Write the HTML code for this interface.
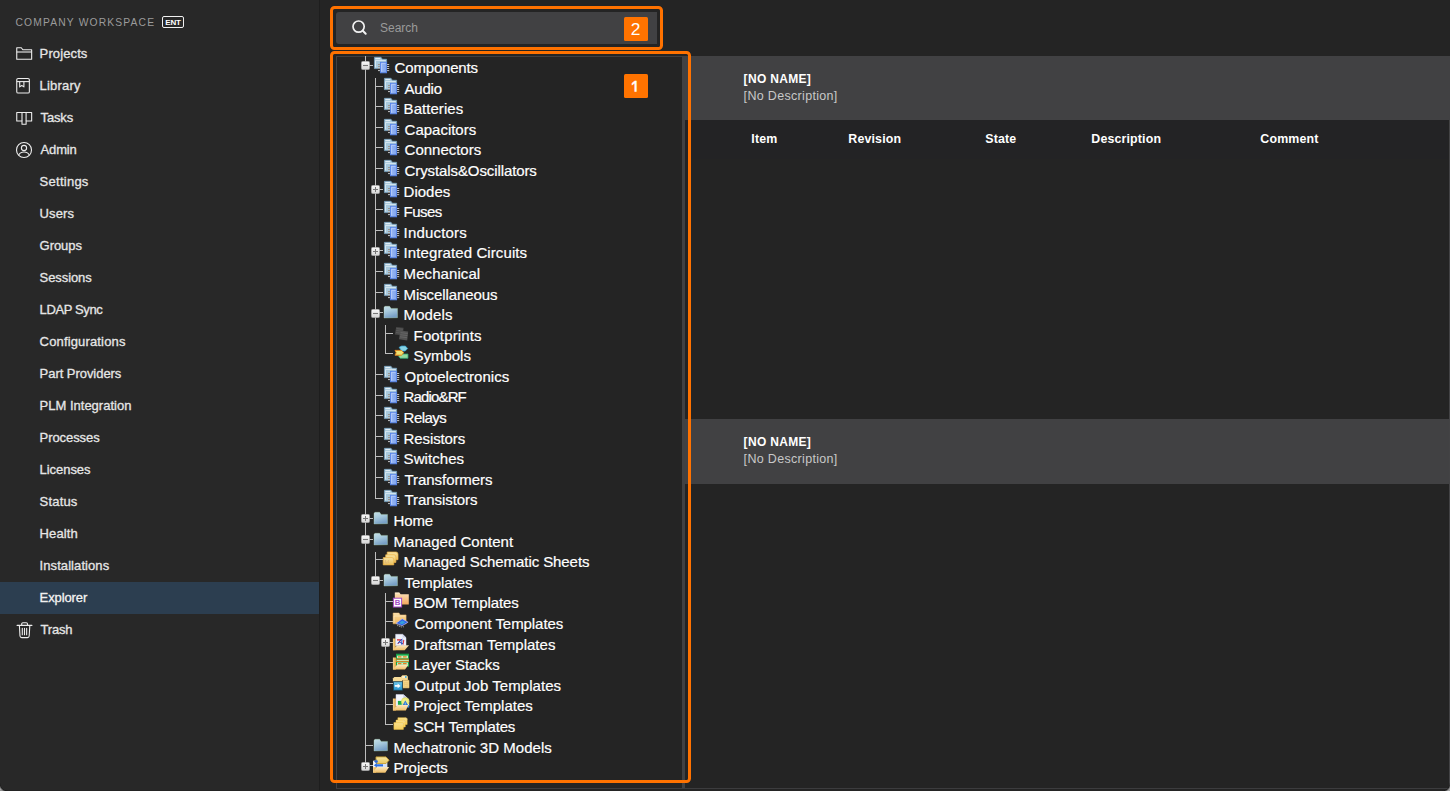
<!DOCTYPE html>
<html lang="en">
<head>
<meta charset="utf-8">
<title>Explorer</title>
<style>
html,body{margin:0;padding:0;background:#242424;}
body{width:1450px;height:791px;overflow:hidden;font-family:"Liberation Sans",sans-serif;color:#fff;}
#app{position:relative;width:1450px;height:791px;overflow:hidden;background:#242424;}
#sidebar{position:absolute;left:0;top:0;width:319px;height:791px;background:#282828;border-right:1px solid #1e1e1e;}
.ws{position:absolute;left:15.5px;top:17px;font-size:10.3px;letter-spacing:1.15px;color:#9b9b9b;line-height:12px;white-space:nowrap;}
.ent{position:absolute;left:162px;top:16px;width:20px;height:10px;border:1px solid #f0f0f0;border-radius:2px;font-size:8px;font-weight:bold;line-height:11px;text-align:center;color:#fff;letter-spacing:-0.1px;}
.sb{position:absolute;left:0;width:319px;height:32px;line-height:32px;font-size:13px;color:#e6e6e6;white-space:nowrap;-webkit-text-stroke:0.3px #e6e6e6;}
.sb span{position:absolute;left:40px;top:0;}
.sb.sel{background:#2c3e50;color:#fff;}
.sbi{position:absolute;left:15px;top:7px;overflow:visible;}
.corner{position:absolute;left:0;bottom:0;width:8px;height:8px;background:radial-gradient(circle at 8px 0px, rgba(0,0,0,0) 7.3px, rgba(20,20,20,0.45) 8px, #a6a6a6 9.6px);}
#sidebar:after{content:'';position:absolute;left:0;bottom:0;width:319px;height:1px;background:rgba(0,0,0,0.12);}
#main{position:absolute;left:0;top:0;width:1450px;height:791px;}
.band{position:absolute;left:685px;width:765px;height:64px;background:#414143;}
#band1{top:56px;}
#band2{top:419px;height:65px;}
#band2 .nn{top:16px;}
#band2 .nd{top:33px;}
#rstrip{position:absolute;left:1449px;top:120px;width:1px;height:669px;background:#434345;}
.corner2{position:absolute;right:0;bottom:0;width:8px;height:8px;background:radial-gradient(circle at 0px 0px, rgba(0,0,0,0) 7.3px, rgba(20,20,20,0.45) 8px, #a6a6a6 9.6px);}
.nn{position:absolute;left:58.6px;top:16px;font-size:12px;letter-spacing:0.32px;font-weight:bold;line-height:14px;color:#fff;white-space:nowrap;}
.nd{position:absolute;left:58.6px;top:32.5px;font-size:12.5px;letter-spacing:0.32px;line-height:14px;color:#c8c8c8;white-space:nowrap;}
#thead{position:absolute;left:685px;top:120px;width:763px;height:39px;background:#232325;}
#thead span{position:absolute;top:12px;font-size:12.4px;letter-spacing:0.15px;font-weight:bold;line-height:15px;margin-left:-0.7px;color:#fff;white-space:nowrap;}
#treepanel{position:absolute;left:336px;top:56px;width:345px;height:732px;border-left:1px solid #414143;border-top:1px solid #3e3e40;background:#242424;}
#split{position:absolute;left:682px;top:56px;width:3px;height:733px;background:#414143;}
#botline{position:absolute;left:336px;top:788px;width:1114px;height:1px;background:#3c3c3e;}
#search{position:absolute;left:336px;top:12px;width:321px;height:32px;background:#414143;border-radius:3px 0 0 3px;}
#search .mag{position:absolute;left:14.8px;top:6.8px;}
#search span{position:absolute;left:44px;top:0;line-height:32px;font-size:12px;color:#9a9a9a;}
.ob{position:absolute;border:3px solid #ff7200;border-radius:4.5px;box-sizing:border-box;}
#ob2{left:330px;top:6px;width:333px;height:44px;}
#ob1{left:330px;top:51px;width:361px;height:732px;}
.badge{position:absolute;width:24px;height:24px;background:#ff7300;color:#fff;font-size:17.4px;line-height:25px;text-align:center;border-radius:1.5px;overflow:hidden;}
.badge span{display:block;margin-left:-1px;}
.badge .one{transform-origin:50% 18.5px;transform:translateY(2.6px) scaleY(1.12);clip-path:inset(0 0 9.6px 0);-webkit-text-stroke:0.4px #fff;margin-left:-1.5px;}
#tree{position:absolute;left:0;top:0;width:682px;height:789px;overflow:hidden;}
#tree .ln{position:absolute;background:#bdbdbd;display:block;}
#tree .exp{position:absolute;}
#tree .ic{position:absolute;overflow:visible;}
.tl{position:absolute;-webkit-text-stroke:0.2px #fff;font-size:15px;line-height:20px;color:#fff;white-space:nowrap;text-align:justify;text-align-last:justify;}

</style>
</head>
<body>
<svg width="0" height="0" style="position:absolute">
<defs>

<linearGradient id="gF" x1="0" y1="0" x2="0.35" y2="1"><stop offset="0" stop-color="#c6e0e8"/><stop offset="0.45" stop-color="#a9cbdd"/><stop offset="1" stop-color="#789fc6"/></linearGradient>
<linearGradient id="gO" x1="0" y1="0" x2="0" y2="1"><stop offset="0" stop-color="#fbe3bd"/><stop offset="1" stop-color="#f3a95c"/></linearGradient>
<linearGradient id="gY" x1="0" y1="0" x2="0" y2="1"><stop offset="0" stop-color="#f7e3a3"/><stop offset="1" stop-color="#e9bf5b"/></linearGradient>
<linearGradient id="gY2" x1="0" y1="0" x2="0" y2="1"><stop offset="0" stop-color="#fbe08a"/><stop offset="1" stop-color="#f5cf5e"/></linearGradient>
<linearGradient id="gO2" x1="0" y1="0" x2="0" y2="1"><stop offset="0" stop-color="#f8d99c"/><stop offset="1" stop-color="#efb960"/></linearGradient>
<linearGradient id="gO3" x1="0" y1="0" x2="0" y2="1"><stop offset="0" stop-color="#fbe9c2"/><stop offset="1" stop-color="#f0bd63"/></linearGradient>
<linearGradient id="gB" x1="0" y1="0" x2="1" y2="0"><stop offset="0" stop-color="#f3d596"/><stop offset="1" stop-color="#e3a238"/></linearGradient>
<linearGradient id="gBl" x1="0" y1="0" x2="0" y2="1"><stop offset="0" stop-color="#6cc6ea"/><stop offset="1" stop-color="#2594cf"/></linearGradient>
<linearGradient id="gT" x1="0" y1="0" x2="0" y2="1"><stop offset="0" stop-color="#f6e6a0"/><stop offset="1" stop-color="#e9c962"/></linearGradient>
<linearGradient id="gE" x1="0" y1="0" x2="0" y2="1"><stop offset="0" stop-color="#fafafa"/><stop offset="1" stop-color="#d4d4d4"/></linearGradient>
<linearGradient id="gC" x1="0" y1="0" x2="1" y2="0"><stop offset="0" stop-color="#9dbaf5"/><stop offset="1" stop-color="#7fa4ee"/></linearGradient>

<g id="expp"><rect x="0.3" y="0.3" width="8.4" height="8.4" rx="1.6" fill="url(#gE)" stroke="#9a9a9a" stroke-width="0.6"/><path d="M2 4.5H7M4.5 2V7" stroke="#777" stroke-width="1"/></g>
<g id="expm"><rect x="0.3" y="0.3" width="8.4" height="8.4" rx="1.6" fill="url(#gE)" stroke="#9a9a9a" stroke-width="0.6"/><path d="M2 4.5H7" stroke="#777" stroke-width="1.1"/></g>

<!-- component folder: folder + blue chip -->
<g id="ic-comp">
<path d="M1.45 1.35H8L9.3 3.3H13.6V12.6H1.45Z" fill="#a9c9dc" stroke="#789fbb" stroke-width="0.9" stroke-linejoin="round"/>
<path d="M2.4 2.4H7.2" stroke="#eef6fa" stroke-width="0.9"/>
<path d="M2.5 11.4V4.4H12.8" stroke="#dcebf3" stroke-width="0.9" fill="none"/>
<path d="M5 8.5H7M5 10.5H7M5 12.5H7" stroke="#9c8f82" stroke-width="0.9"/>
<path d="M5 14.6H7" stroke="#d8d8d8" stroke-width="0.9"/>
<path d="M14 8.5H16.2M14 10.5H16.2M14 12.5H16.2M14 14.6H16.2" stroke="#d0d0d0" stroke-width="0.9"/>
<rect x="7.4" y="6.3" width="6.2" height="10.5" fill="url(#gC)" stroke="#5583ea" stroke-width="0.9"/>
<path d="M8.5 15.5V7.4H12.6" stroke="#b9cefa" stroke-width="0.8" fill="none"/>
</g>

<!-- plain folder -->
<g id="ic-folder">
<path d="M1.2 15.3V4.4L2.3 3.4H6.9L8.4 5.4H14.9V15.2Z" fill="#1c2a14"/>
<path d="M1 15V4.2L2 3.3H6.6L8.1 5.4H14.5V14.7Z" fill="url(#gF)" stroke="#b9dcc0" stroke-width="0.35"/>
</g>

<!-- footprints (dark grey) -->
<g id="ic-foot">
<path d="M3.2 3L10.6 3.8L9.8 11.6L1.8 10.4Z" fill="#474747"/>
<path d="M3.6 4.6L9.8 5.3M3.3 6.6L9.6 7.3M3 8.6L9.4 9.3" stroke="#5f5f5f" stroke-width="0.8"/>
<path d="M7.2 6.6L15.2 7.6L14.2 16.4L6 15.2Z" fill="#515151"/>
<path d="M7.6 8.6L14.6 9.5M7.3 10.7L14.4 11.6M7 12.8L14.1 13.7" stroke="#6b6b6b" stroke-width="0.8"/>
</g>

<!-- symbols -->
<g id="ic-sym">
<path d="M6.2 3.3L8.6 2.1H12.4L14.6 4.5L12.2 7H8.6Z" fill="#86d3e4" stroke="#3fa9d6" stroke-width="0.8" stroke-linejoin="round"/>
<path d="M5.6 12.2L7.2 10H15V14.3H7.2Z" fill="#93dba0" stroke="#2fa274" stroke-width="0.8" stroke-linejoin="round"/>
<path d="M2 6.4H8.4L10.8 8.8L8.4 11.2H2L3.2 8.8Z" fill="#efe273" stroke="#e0861c" stroke-width="1" stroke-linejoin="round"/>
</g>

<!-- managed schematic sheets: three stacked yellow sheets (rounded) -->
<g id="ic-sheets">
<path d="M4.2 2H13.2Q15 2.2 15 4.2V9.7H4.2Z" fill="url(#gY)" stroke="#eeb245" stroke-width="0.7"/>
<path d="M2.7 4.8H11Q12.9 5 12.9 7V12.4H2.7Z" fill="url(#gY)" stroke="#eeb245" stroke-width="0.7"/>
<path d="M0.2 7.6H9Q10.8 7.8 10.8 9.8V14.9H0.2Z" fill="url(#gY)" stroke="#eeb245" stroke-width="0.7"/>
<path d="M2.4 10V13H4.2M6.2 10.2C4.8 10.2 4.8 13 6.2 13" stroke="#dcb27c" stroke-width="0.8" fill="none"/>
</g>
<g id="ic-scht">
<path d="M4.9 2.7H13.2L14.15 3.7V9.5H4.9Z" fill="url(#gY2)" stroke="#f0c040" stroke-width="0.5"/>
<path d="M3 5.1H11.3L12.25 6.1V12H3Z" fill="url(#gY2)" stroke="#f0c040" stroke-width="0.5"/>
<path d="M0.9 7.6H9.4L10.4 8.6V14.4H0.9Z" fill="url(#gY2)" stroke="#f0c040" stroke-width="0.5"/>
<path d="M12.4 2.9L14 4.5M10.5 5.3L12.1 6.9M8.6 7.8L10.2 9.4" stroke="#d9d0b0" stroke-width="0.7"/>
</g>

<!-- BOM templates -->
<g id="ic-bom">
<path d="M1.8 1.4H6.4L7.6 3.2H15.8V13.5H1.8Z" fill="url(#gO)"/>
<path d="M2.3 2.2H6" stroke="#fdf0d8" stroke-width="0.8"/>
<rect x="0.4" y="7.2" width="8.2" height="8.8" fill="#fff" stroke="#a64fc9" stroke-width="1"/>
<text x="4.5" y="14.4" font-family="Liberation Sans, sans-serif" font-size="7.8" font-weight="bold" fill="#a34bc7" text-anchor="middle">B</text>
</g>

<!-- component templates -->
<g id="ic-cmpt">
<path d="M0.1 1H6L7.2 2.9H13.1V11.8H0.1Z" fill="url(#gO2)" stroke="#e6b56c" stroke-width="0.5"/>
<path d="M0.9 1.9H5.6M1 10.8V4H12.3" stroke="#fbe6be" stroke-width="0.8" fill="none"/>
<path d="M4.2 12.4L4.8 14.2M6 13.2L6.6 15M8 14L8.4 15.6M10.2 14L10.4 15.4" stroke="#b8b8b0" stroke-width="0.7"/>
<path d="M3.15 11.2L9.2 6.8L15.1 10.2L9 13.8Z" fill="#2d5fe8" stroke="#c9c2ee" stroke-width="0.6" stroke-linejoin="round"/>
<path d="M6 10.9L9.2 8.5L12.3 10.3L9.1 12.4Z" fill="#37a0da"/>
</g>

<!-- draftsman templates -->
<g id="ic-draft">
<path d="M-0.1 5.5H2.8V17.2H-0.1Z" fill="url(#gB)"/>
<path d="M2.6 1.3H9.6L13 4.6V12.8H2.6Z" fill="#eef1fb" stroke="#d4d8ee" stroke-width="0.5"/>
<path d="M9.6 1.3V4.6H13Z" fill="#c9cfe6"/>
<path d="M4 6.9H8L5 10.6" stroke="#dc2430" stroke-width="1.1" fill="none"/>
<path d="M10.8 6.8L10 11.6" stroke="#dc3a44" stroke-width="1.1" fill="none"/>
<path d="M9.2 5.8L4.6 10.4M9 6.4L8.6 11.6M6.2 9L10 10.8" stroke="#2a55c4" stroke-width="1" fill="none"/>
<path d="M3.9 12.5L16 12.3L11.7 17.2H-0.1Z" fill="url(#gO3)"/>
</g>

<!-- layer stacks -->
<g id="ic-layer">
<path d="M-0.1 4.5H3V16.6H-0.1Z" fill="url(#gB)"/>
<rect x="3" y="0.7" width="13" height="13" fill="#17a046"/>
<rect x="4" y="2.6" width="11" height="2.7" fill="#c9f2c2"/>
<rect x="3.6" y="6.9" width="12.2" height="1.3" fill="#c9f2c2"/>
<rect x="4" y="9.4" width="11" height="2.4" fill="#c9f2c2"/>
<path d="M5 3.9H8.4M10 3.9H13.6M5 10.6H8.4M10 10.6H13.6" stroke="#f07c1c" stroke-width="1.4"/>
<path d="M3 6.2H16M3 8.4H16" stroke="#f07c1c" stroke-width="0.9"/>
<path d="M4.1 11.7H15.5L12 16.6H-0.1Z" fill="url(#gO3)"/>
</g>

<!-- output job templates -->
<g id="ic-outjob">
<path d="M8.1 6.3V2.6L9.4 1.2H13.6L14.9 2.6V6.3Z" fill="#f6d88f"/>
<path d="M9.2 2.3H12.2V3.7H9.2Z" fill="#fbf6e6"/>
<path d="M12 2H13.5V3.9H12Z" fill="#4fb4e0"/>
<path d="M-0.1 7.6V4.4L1.4 3H8.2L9.2 4.4V7.6Z" fill="#f7dc98"/>
<path d="M10 6.3H16V13.9H10Z" fill="#f8dc92" stroke="#e9bd62" stroke-width="0.6"/>
<path d="M11.4 8.2H14.8V12.4H11.4ZM11.4 10.3H14.8M13.1 8.2V12.4" fill="none" stroke="#e3bd6c" stroke-width="0.6"/>
<rect x="0.6" y="7.8" width="8.7" height="8.4" fill="url(#gBl)" stroke="#1b4a62" stroke-width="0.7"/>
<path d="M1.8 11.9H5.2" stroke="#fff" stroke-width="1.7"/>
<path d="M4.6 9.5L7.6 11.9L4.6 14.3Z" fill="#fff"/>
</g>

<!-- project templates -->
<g id="ic-prjt">
<path d="M-0.1 4.5H3V16.5H-0.1Z" fill="url(#gB)"/>
<path d="M3 0.5H10.4L16 5.6V12H3Z" fill="#f3f5fc" stroke="#cfd3ee" stroke-width="0.5"/>
<path d="M10.4 0.5V4.4L14.6 4.3Z" fill="#c6cbe8"/>
<rect x="4.9" y="6.9" width="3.9" height="3.9" fill="#1faa48"/>
<circle cx="12.25" cy="7.5" r="3.8" fill="#f0ee86" stroke="#d8d44a" stroke-width="0.6"/>
<path d="M12.3 6.4L15 11H9.7Z" fill="#2f7ad8"/>
<path d="M12.3 8.6V10.6" stroke="#cfe4fa" stroke-width="0.6"/>
<path d="M14.4 11H16.2V13.4L14.4 13.8Z" fill="#2f86dc"/>
<path d="M4.3 10.9H15.5L12.8 16.5H-0.1Z" fill="url(#gO3)"/>
</g>

<!-- projects (root) -->
<g id="ic-prj">
<path d="M0 5H3V16.7H0Z" fill="url(#gB)"/>
<path d="M0.2 4.6H14.2V11.2H0.2Z" fill="#f4f7fd"/>
<path d="M10 7H14.2V11.2H10Z" fill="#d5e2f8"/>
<path d="M3 0.9H13L16.1 4.2L13 7.5H3Z" fill="url(#gT)" stroke="#c9a033" stroke-width="0.9" stroke-linejoin="round"/>
<path d="M1 5.4L3.6 3.2V4.6H4.8V6.4H3.6V7.6Z" fill="#2a66d8"/>
<path d="M0.9 9.3L3.8 6.9V8.2H10V10.4H3.8V11.6Z" fill="#2c6fe0"/>
<path d="M3.6 11H16.1L12.3 16.7H0Z" fill="url(#gO3)"/>
</g>

<!-- sidebar icons -->
<g id="i-folder" fill="none" stroke="#ededed" stroke-width="1.1" stroke-linejoin="round"><path d="M1.75 2.75H6.3L7.8 4.75H16.65V14.3H1.75Z"/><path d="M1.75 7H16.65"/></g>
<g id="i-lib" fill="none" stroke="#ededed" stroke-width="1.1" stroke-linejoin="round"><rect x="1.75" y="1.45" width="12.6" height="14.6" rx="1.4"/><path d="M1.75 4.6H14.35"/><path d="M4.7 4.6V9.9L6.8 8.5L8.9 9.9V4.6"/></g>
<g id="i-tasks" fill="none" stroke="#ededed" stroke-width="1.1" stroke-linejoin="round"><path d="M1.75 3.5H16.65V12H11.1V15.3H7V12H1.75Z" /><path d="M7 3.5V12M11.1 3.5V12"/></g>
<g id="i-admin" fill="none" stroke="#ededed" stroke-width="1.1"><circle cx="9" cy="9" r="7.5"/><circle cx="9" cy="7" r="2.6"/><path d="M3.8 14.2C4.6 11.8 6.6 11 9 11S13.4 11.8 14.2 14.2"/></g>
<g id="i-trash" fill="none" stroke="#ededed" stroke-width="1.1" stroke-linejoin="round" stroke-linecap="round"><path d="M2.1 4.4H16.9"/><path d="M6.7 4.4V2.9C6.7 2.2 7.2 1.75 7.9 1.75H11.3C12 1.75 12.5 2.2 12.5 2.9V4.4"/><path d="M4.4 4.6L5 15C5.1 16 5.7 16.65 6.7 16.65H12.5C13.5 16.65 14.1 16 14.2 15L14.8 4.6"/><path d="M7.3 7.2V13.8M9.5 7.2V13.8M11.65 7.2V13.8"/></g>

</defs>
</svg>
<div id="app">
<div id="sidebar">
<div class="ws">COMPANY WORKSPACE</div><div class="ent">ENT</div>
<div class="sb" style="top:38px"><svg class="sbi" width="18" height="18" viewBox="0 0 18 18"><use href="#i-folder"/></svg><span style="left:39.6px;letter-spacing:0.114px">Projects</span></div>
<div class="sb" style="top:70px"><svg class="sbi" width="18" height="18" viewBox="0 0 18 18"><use href="#i-lib"/></svg><span style="left:39.6px;letter-spacing:0.200px">Library</span></div>
<div class="sb" style="top:102px"><svg class="sbi" width="18" height="18" viewBox="0 0 18 18"><use href="#i-tasks"/></svg><span style="left:40.6px;letter-spacing:-0.150px">Tasks</span></div>
<div class="sb" style="top:134px"><svg class="sbi" width="18" height="18" viewBox="0 0 18 18"><use href="#i-admin"/></svg><span style="left:40.6px;letter-spacing:-0.150px">Admin</span></div>
<div class="sb" style="top:166px"><span style="left:39.6px;letter-spacing:0.257px">Settings</span></div>
<div class="sb" style="top:198px"><span style="left:39.6px;letter-spacing:0.100px">Users</span></div>
<div class="sb" style="top:230px"><span style="left:39.6px;letter-spacing:-0.060px">Groups</span></div>
<div class="sb" style="top:262px"><span style="left:39.6px;letter-spacing:-0.086px">Sessions</span></div>
<div class="sb" style="top:294px"><span style="left:39.6px;letter-spacing:-0.375px">LDAP Sync</span></div>
<div class="sb" style="top:326px"><span style="left:39.6px;letter-spacing:0.154px">Configurations</span></div>
<div class="sb" style="top:358px"><span style="left:39.6px;letter-spacing:-0.046px">Part Providers</span></div>
<div class="sb" style="top:390px"><span style="left:39.6px;letter-spacing:0.000px">PLM Integration</span></div>
<div class="sb" style="top:422px"><span style="left:39.6px;letter-spacing:-0.075px">Processes</span></div>
<div class="sb" style="top:454px"><span style="left:39.6px;letter-spacing:-0.057px">Licenses</span></div>
<div class="sb" style="top:486px"><span style="left:39.6px;letter-spacing:0.180px">Status</span></div>
<div class="sb" style="top:518px"><span style="left:39.6px;letter-spacing:0.100px">Health</span></div>
<div class="sb" style="top:550px"><span style="left:39.6px;letter-spacing:0.075px">Installations</span></div>
<div class="sb sel" style="top:582px"><span style="left:39.6px;letter-spacing:-0.100px">Explorer</span></div>
<div class="sb" style="top:614px"><svg class="sbi" width="18" height="18" viewBox="0 0 18 18"><use href="#i-trash"/></svg><span style="left:40.6px;letter-spacing:-0.225px">Trash</span></div>
<div class="corner"></div>
</div>
<div id="main">
<div id="band1" class="band"><div class="nn">[NO NAME]</div><div class="nd">[No Description]</div></div>
<div id="thead"><span style="left:67px">Item</span><span style="left:164px">Revision</span><span style="left:301px">State</span><span style="left:407px">Description</span><span style="left:576px">Comment</span></div>
<div id="band2" class="band"><div class="nn">[NO NAME]</div><div class="nd">[No Description]</div></div>
<div id="treepanel"></div>
<div id="split"></div>
<div id="botline"></div>
<div id="rstrip"></div>
<div class="corner2"></div>
<div id="search"><svg class="mag" width="18" height="18" viewBox="0 0 18 18"><circle cx="7.6" cy="7.6" r="5.6" fill="none" stroke="#f2f2f2" stroke-width="1.7"/><path d="M11.8 11.8 L14.7 14.7" stroke="#f2f2f2" stroke-width="2" stroke-linecap="round"/></svg><span>Search</span></div>
<div id="tree">
<i class="ln" style="left:365px;top:56px;width:1px;height:709.83px"></i>
<i class="ln" style="left:375px;top:78.09px;width:1px;height:420px"></i>
<i class="ln" style="left:385px;top:325.24px;width:1px;height:28.69px"></i>
<i class="ln" style="left:375px;top:551.78px;width:1px;height:28.7px"></i>
<i class="ln" style="left:385px;top:592.97px;width:1px;height:131.67px"></i>
<i class="ln" style="left:365px;top:65.1px;width:8px;height:1px"></i>
<i class="ln" style="left:375px;top:85.69px;width:8px;height:1px"></i>
<i class="ln" style="left:375px;top:106.29px;width:8px;height:1px"></i>
<i class="ln" style="left:375px;top:126.88px;width:8px;height:1px"></i>
<i class="ln" style="left:375px;top:147.48px;width:8px;height:1px"></i>
<i class="ln" style="left:375px;top:168.07px;width:8px;height:1px"></i>
<i class="ln" style="left:375px;top:188.67px;width:8px;height:1px"></i>
<i class="ln" style="left:375px;top:209.26px;width:8px;height:1px"></i>
<i class="ln" style="left:375px;top:229.86px;width:8px;height:1px"></i>
<i class="ln" style="left:375px;top:250.45px;width:8px;height:1px"></i>
<i class="ln" style="left:375px;top:271.05px;width:8px;height:1px"></i>
<i class="ln" style="left:375px;top:291.64px;width:8px;height:1px"></i>
<i class="ln" style="left:375px;top:312.24px;width:8px;height:1px"></i>
<i class="ln" style="left:385px;top:332.84px;width:8px;height:1px"></i>
<i class="ln" style="left:385px;top:353.43px;width:8px;height:1px"></i>
<i class="ln" style="left:375px;top:374.02px;width:8px;height:1px"></i>
<i class="ln" style="left:375px;top:394.62px;width:8px;height:1px"></i>
<i class="ln" style="left:375px;top:415.22px;width:8px;height:1px"></i>
<i class="ln" style="left:375px;top:435.81px;width:8px;height:1px"></i>
<i class="ln" style="left:375px;top:456.4px;width:8px;height:1px"></i>
<i class="ln" style="left:375px;top:477px;width:8px;height:1px"></i>
<i class="ln" style="left:375px;top:497.6px;width:8px;height:1px"></i>
<i class="ln" style="left:365px;top:518.19px;width:8px;height:1px"></i>
<i class="ln" style="left:365px;top:538.78px;width:8px;height:1px"></i>
<i class="ln" style="left:375px;top:559.38px;width:8px;height:1px"></i>
<i class="ln" style="left:375px;top:579.98px;width:8px;height:1px"></i>
<i class="ln" style="left:385px;top:600.57px;width:8px;height:1px"></i>
<i class="ln" style="left:385px;top:621.16px;width:8px;height:1px"></i>
<i class="ln" style="left:385px;top:641.76px;width:8px;height:1px"></i>
<i class="ln" style="left:385px;top:662.36px;width:8px;height:1px"></i>
<i class="ln" style="left:385px;top:682.95px;width:8px;height:1px"></i>
<i class="ln" style="left:385px;top:703.54px;width:8px;height:1px"></i>
<i class="ln" style="left:385px;top:724.14px;width:8px;height:1px"></i>
<i class="ln" style="left:365px;top:744.74px;width:8px;height:1px"></i>
<i class="ln" style="left:365px;top:765.33px;width:8px;height:1px"></i>
<svg class="exp" style="left:361px;top:61.4px" width="9" height="9" viewBox="0 0 9 9"><use href="#expm"/></svg>
<svg class="ic" style="left:373px;top:56px" width="18" height="18" viewBox="0 0 18 18"><use href="#ic-comp"/></svg>
<span class="tl" style="left:394.59px;top:58px;letter-spacing:-0.178px">Components</span>
<svg class="ic" style="left:383px;top:76.59px" width="18" height="18" viewBox="0 0 18 18"><use href="#ic-comp"/></svg>
<span class="tl" style="left:404.59px;top:79px;letter-spacing:-0.225px">Audio</span>
<svg class="ic" style="left:383px;top:97.19px" width="18" height="18" viewBox="0 0 18 18"><use href="#ic-comp"/></svg>
<span class="tl" style="left:403.59px;top:99px;letter-spacing:0.050px">Batteries</span>
<svg class="ic" style="left:383px;top:117.78px" width="18" height="18" viewBox="0 0 18 18"><use href="#ic-comp"/></svg>
<span class="tl" style="left:404.59px;top:120px;letter-spacing:-0.011px">Capacitors</span>
<svg class="ic" style="left:383px;top:138.38px" width="18" height="18" viewBox="0 0 18 18"><use href="#ic-comp"/></svg>
<span class="tl" style="left:404.59px;top:140px;letter-spacing:-0.011px">Connectors</span>
<svg class="ic" style="left:383px;top:158.97px" width="18" height="18" viewBox="0 0 18 18"><use href="#ic-comp"/></svg>
<span class="tl" style="left:404.59px;top:161px;letter-spacing:-0.100px">Crystals&amp;Oscillators</span>
<svg class="exp" style="left:371px;top:184.97px" width="9" height="9" viewBox="0 0 9 9"><use href="#expp"/></svg>
<svg class="ic" style="left:383px;top:179.57px" width="18" height="18" viewBox="0 0 18 18"><use href="#ic-comp"/></svg>
<span class="tl" style="left:403.59px;top:182px;letter-spacing:0.000px">Diodes</span>
<svg class="ic" style="left:383px;top:200.16px" width="18" height="18" viewBox="0 0 18 18"><use href="#ic-comp"/></svg>
<span class="tl" style="left:403.59px;top:202px;letter-spacing:-0.550px">Fuses</span>
<svg class="ic" style="left:383px;top:220.76px" width="18" height="18" viewBox="0 0 18 18"><use href="#ic-comp"/></svg>
<span class="tl" style="left:403.59px;top:223px;letter-spacing:0.188px">Inductors</span>
<svg class="exp" style="left:371px;top:246.75px" width="9" height="9" viewBox="0 0 9 9"><use href="#expp"/></svg>
<svg class="ic" style="left:383px;top:241.35px" width="18" height="18" viewBox="0 0 18 18"><use href="#ic-comp"/></svg>
<span class="tl" style="left:403.59px;top:243px;letter-spacing:0.100px">Integrated Circuits</span>
<svg class="ic" style="left:383px;top:261.95px" width="18" height="18" viewBox="0 0 18 18"><use href="#ic-comp"/></svg>
<span class="tl" style="left:403.59px;top:264px;letter-spacing:0.078px">Mechanical</span>
<svg class="ic" style="left:383px;top:282.54px" width="18" height="18" viewBox="0 0 18 18"><use href="#ic-comp"/></svg>
<span class="tl" style="left:403.59px;top:285px;letter-spacing:-0.100px">Miscellaneous</span>
<svg class="exp" style="left:371px;top:308.54px" width="9" height="9" viewBox="0 0 9 9"><use href="#expm"/></svg>
<svg class="ic" style="left:383px;top:303.14px" width="18" height="18" viewBox="0 0 18 18"><use href="#ic-folder"/></svg>
<span class="tl" style="left:403.59px;top:305px;letter-spacing:0.100px">Models</span>
<svg class="ic" style="left:393px;top:323.74px" width="18" height="18" viewBox="0 0 18 18"><use href="#ic-foot"/></svg>
<span class="tl" style="left:413.59px;top:326px;letter-spacing:0.144px">Footprints</span>
<svg class="ic" style="left:393px;top:344.33px" width="18" height="18" viewBox="0 0 18 18"><use href="#ic-sym"/></svg>
<span class="tl" style="left:413.59px;top:346px;letter-spacing:-0.033px">Symbols</span>
<svg class="ic" style="left:383px;top:364.92px" width="18" height="18" viewBox="0 0 18 18"><use href="#ic-comp"/></svg>
<span class="tl" style="left:404.59px;top:367px;letter-spacing:0.029px">Optoelectronics</span>
<svg class="ic" style="left:383px;top:385.52px" width="18" height="18" viewBox="0 0 18 18"><use href="#ic-comp"/></svg>
<span class="tl" style="left:403.59px;top:387px;letter-spacing:-0.857px">Radio&amp;RF</span>
<svg class="ic" style="left:383px;top:406.12px" width="18" height="18" viewBox="0 0 18 18"><use href="#ic-comp"/></svg>
<span class="tl" style="left:403.59px;top:408px;letter-spacing:-0.520px">Relays</span>
<svg class="ic" style="left:383px;top:426.71px" width="18" height="18" viewBox="0 0 18 18"><use href="#ic-comp"/></svg>
<span class="tl" style="left:403.59px;top:429px;letter-spacing:-0.112px">Resistors</span>
<svg class="ic" style="left:383px;top:447.3px" width="18" height="18" viewBox="0 0 18 18"><use href="#ic-comp"/></svg>
<span class="tl" style="left:403.59px;top:449px;letter-spacing:0.071px">Switches</span>
<svg class="ic" style="left:383px;top:467.9px" width="18" height="18" viewBox="0 0 18 18"><use href="#ic-comp"/></svg>
<span class="tl" style="left:404.59px;top:470px;letter-spacing:-0.064px">Transformers</span>
<svg class="ic" style="left:383px;top:488.5px" width="18" height="18" viewBox="0 0 18 18"><use href="#ic-comp"/></svg>
<span class="tl" style="left:404.59px;top:490px;letter-spacing:-0.080px">Transistors</span>
<svg class="exp" style="left:361px;top:514.49px" width="9" height="9" viewBox="0 0 9 9"><use href="#expp"/></svg>
<svg class="ic" style="left:373px;top:509.09px" width="18" height="18" viewBox="0 0 18 18"><use href="#ic-folder"/></svg>
<span class="tl" style="left:393.59px;top:511px;letter-spacing:-0.167px">Home</span>
<svg class="exp" style="left:361px;top:535.08px" width="9" height="9" viewBox="0 0 9 9"><use href="#expm"/></svg>
<svg class="ic" style="left:373px;top:529.68px" width="18" height="18" viewBox="0 0 18 18"><use href="#ic-folder"/></svg>
<span class="tl" style="left:393.59px;top:532px;letter-spacing:0.021px">Managed Content</span>
<svg class="ic" style="left:383px;top:550.28px" width="18" height="18" viewBox="0 0 18 18"><use href="#ic-sheets"/></svg>
<span class="tl" style="left:403.59px;top:552px;letter-spacing:-0.074px">Managed Schematic Sheets</span>
<svg class="exp" style="left:371px;top:576.27px" width="9" height="9" viewBox="0 0 9 9"><use href="#expm"/></svg>
<svg class="ic" style="left:383px;top:570.88px" width="18" height="18" viewBox="0 0 18 18"><use href="#ic-folder"/></svg>
<span class="tl" style="left:404.59px;top:573px;letter-spacing:-0.062px">Templates</span>
<svg class="ic" style="left:393px;top:591.47px" width="18" height="18" viewBox="0 0 18 18"><use href="#ic-bom"/></svg>
<span class="tl" style="left:413.59px;top:593px;letter-spacing:-0.108px">BOM Templates</span>
<svg class="ic" style="left:393px;top:612.06px" width="18" height="18" viewBox="0 0 18 18"><use href="#ic-cmpt"/></svg>
<span class="tl" style="left:414.59px;top:614px;letter-spacing:-0.061px">Component Templates</span>
<svg class="exp" style="left:381px;top:638.06px" width="9" height="9" viewBox="0 0 9 9"><use href="#expp"/></svg>
<svg class="ic" style="left:393px;top:632.66px" width="18" height="18" viewBox="0 0 18 18"><use href="#ic-draft"/></svg>
<span class="tl" style="left:413.59px;top:635px;letter-spacing:0.022px">Draftsman Templates</span>
<svg class="ic" style="left:393px;top:653.25px" width="18" height="18" viewBox="0 0 18 18"><use href="#ic-layer"/></svg>
<span class="tl" style="left:413.59px;top:655px;letter-spacing:-0.055px">Layer Stacks</span>
<svg class="ic" style="left:393px;top:673.85px" width="18" height="18" viewBox="0 0 18 18"><use href="#ic-outjob"/></svg>
<span class="tl" style="left:414.59px;top:676px;letter-spacing:0.042px">Output Job Templates</span>
<svg class="ic" style="left:393px;top:694.44px" width="18" height="18" viewBox="0 0 18 18"><use href="#ic-prjt"/></svg>
<span class="tl" style="left:413.59px;top:696px;letter-spacing:0.019px">Project Templates</span>
<svg class="ic" style="left:393px;top:715.04px" width="18" height="18" viewBox="0 0 18 18"><use href="#ic-scht"/></svg>
<span class="tl" style="left:413.59px;top:717px;letter-spacing:-0.183px">SCH Templates</span>
<svg class="ic" style="left:373px;top:735.63px" width="18" height="18" viewBox="0 0 18 18"><use href="#ic-folder"/></svg>
<span class="tl" style="left:393.59px;top:738px;letter-spacing:0.035px">Mechatronic 3D Models</span>
<svg class="exp" style="left:361px;top:761.63px" width="9" height="9" viewBox="0 0 9 9"><use href="#expp"/></svg>
<svg class="ic" style="left:373px;top:756.23px" width="18" height="18" viewBox="0 0 18 18"><use href="#ic-prj"/></svg>
<span class="tl" style="left:393.59px;top:758px;letter-spacing:0.014px">Projects</span>
</div>
<div class="ob" id="ob2"></div>
<div class="ob" id="ob1"></div>
<div class="badge" style="left:624px;top:17px"><span>2</span></div>
<div class="badge" style="left:624px;top:74px"><span class="one">1</span></div>
</div>
</div>
</body>
</html>
